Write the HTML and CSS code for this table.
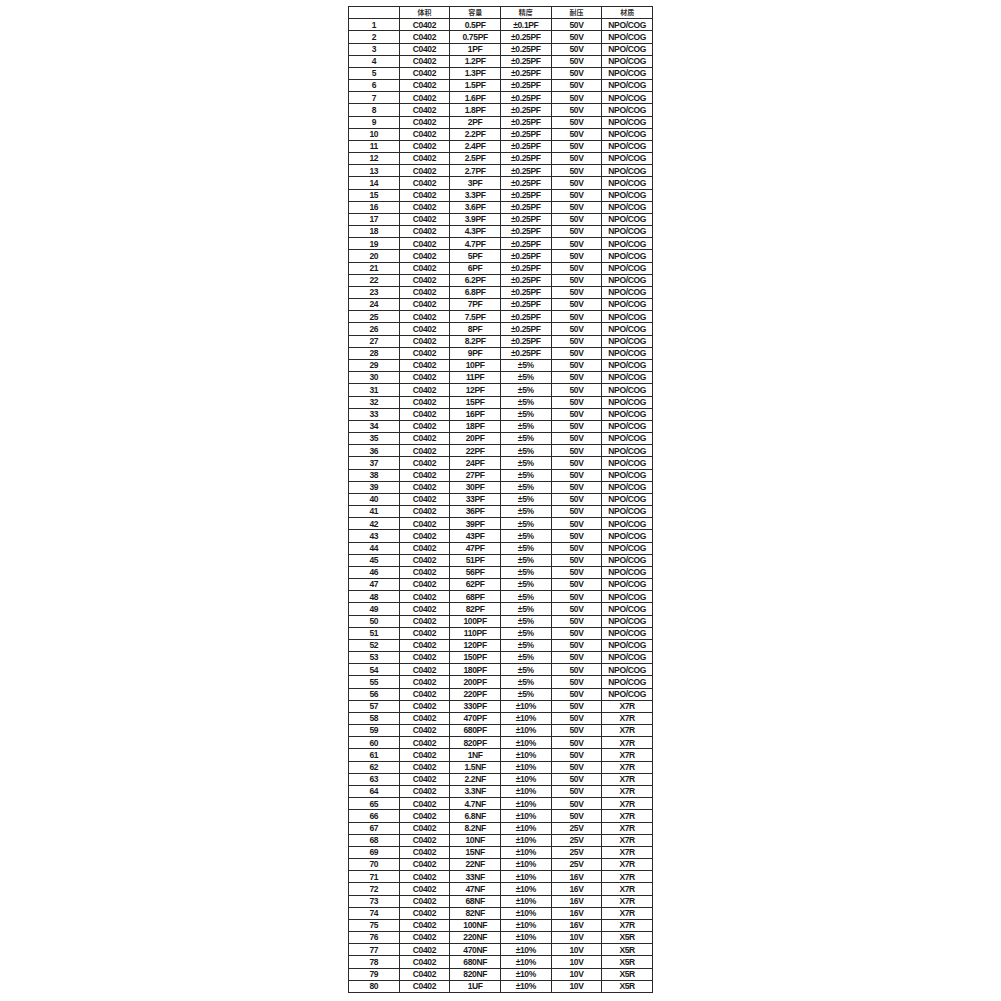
FILE: index.html
```html
<!DOCTYPE html>
<html lang="zh">
<head>
<meta charset="utf-8">
<title>C0402 电容规格表</title>
<link rel="stylesheet" href="styles.css">
</head>
<body>
<table class="spec">
<thead>
<tr><th></th><th>体积</th><th>容量</th><th>精度</th><th>耐压</th><th>材质</th></tr>
</thead>
<tbody>
<tr><td>1</td><td>C0402</td><td>0.5PF</td><td>±0.1PF</td><td>50V</td><td>NPO/COG</td></tr>
<tr><td>2</td><td>C0402</td><td>0.75PF</td><td>±0.25PF</td><td>50V</td><td>NPO/COG</td></tr>
<tr><td>3</td><td>C0402</td><td>1PF</td><td>±0.25PF</td><td>50V</td><td>NPO/COG</td></tr>
<tr><td>4</td><td>C0402</td><td>1.2PF</td><td>±0.25PF</td><td>50V</td><td>NPO/COG</td></tr>
<tr><td>5</td><td>C0402</td><td>1.3PF</td><td>±0.25PF</td><td>50V</td><td>NPO/COG</td></tr>
<tr><td>6</td><td>C0402</td><td>1.5PF</td><td>±0.25PF</td><td>50V</td><td>NPO/COG</td></tr>
<tr><td>7</td><td>C0402</td><td>1.6PF</td><td>±0.25PF</td><td>50V</td><td>NPO/COG</td></tr>
<tr><td>8</td><td>C0402</td><td>1.8PF</td><td>±0.25PF</td><td>50V</td><td>NPO/COG</td></tr>
<tr><td>9</td><td>C0402</td><td>2PF</td><td>±0.25PF</td><td>50V</td><td>NPO/COG</td></tr>
<tr><td>10</td><td>C0402</td><td>2.2PF</td><td>±0.25PF</td><td>50V</td><td>NPO/COG</td></tr>
<tr><td>11</td><td>C0402</td><td>2.4PF</td><td>±0.25PF</td><td>50V</td><td>NPO/COG</td></tr>
<tr><td>12</td><td>C0402</td><td>2.5PF</td><td>±0.25PF</td><td>50V</td><td>NPO/COG</td></tr>
<tr><td>13</td><td>C0402</td><td>2.7PF</td><td>±0.25PF</td><td>50V</td><td>NPO/COG</td></tr>
<tr><td>14</td><td>C0402</td><td>3PF</td><td>±0.25PF</td><td>50V</td><td>NPO/COG</td></tr>
<tr><td>15</td><td>C0402</td><td>3.3PF</td><td>±0.25PF</td><td>50V</td><td>NPO/COG</td></tr>
<tr><td>16</td><td>C0402</td><td>3.6PF</td><td>±0.25PF</td><td>50V</td><td>NPO/COG</td></tr>
<tr><td>17</td><td>C0402</td><td>3.9PF</td><td>±0.25PF</td><td>50V</td><td>NPO/COG</td></tr>
<tr><td>18</td><td>C0402</td><td>4.3PF</td><td>±0.25PF</td><td>50V</td><td>NPO/COG</td></tr>
<tr><td>19</td><td>C0402</td><td>4.7PF</td><td>±0.25PF</td><td>50V</td><td>NPO/COG</td></tr>
<tr><td>20</td><td>C0402</td><td>5PF</td><td>±0.25PF</td><td>50V</td><td>NPO/COG</td></tr>
<tr><td>21</td><td>C0402</td><td>6PF</td><td>±0.25PF</td><td>50V</td><td>NPO/COG</td></tr>
<tr><td>22</td><td>C0402</td><td>6.2PF</td><td>±0.25PF</td><td>50V</td><td>NPO/COG</td></tr>
<tr><td>23</td><td>C0402</td><td>6.8PF</td><td>±0.25PF</td><td>50V</td><td>NPO/COG</td></tr>
<tr><td>24</td><td>C0402</td><td>7PF</td><td>±0.25PF</td><td>50V</td><td>NPO/COG</td></tr>
<tr><td>25</td><td>C0402</td><td>7.5PF</td><td>±0.25PF</td><td>50V</td><td>NPO/COG</td></tr>
<tr><td>26</td><td>C0402</td><td>8PF</td><td>±0.25PF</td><td>50V</td><td>NPO/COG</td></tr>
<tr><td>27</td><td>C0402</td><td>8.2PF</td><td>±0.25PF</td><td>50V</td><td>NPO/COG</td></tr>
<tr><td>28</td><td>C0402</td><td>9PF</td><td>±0.25PF</td><td>50V</td><td>NPO/COG</td></tr>
<tr><td>29</td><td>C0402</td><td>10PF</td><td>±5%</td><td>50V</td><td>NPO/COG</td></tr>
<tr><td>30</td><td>C0402</td><td>11PF</td><td>±5%</td><td>50V</td><td>NPO/COG</td></tr>
<tr><td>31</td><td>C0402</td><td>12PF</td><td>±5%</td><td>50V</td><td>NPO/COG</td></tr>
<tr><td>32</td><td>C0402</td><td>15PF</td><td>±5%</td><td>50V</td><td>NPO/COG</td></tr>
<tr><td>33</td><td>C0402</td><td>16PF</td><td>±5%</td><td>50V</td><td>NPO/COG</td></tr>
<tr><td>34</td><td>C0402</td><td>18PF</td><td>±5%</td><td>50V</td><td>NPO/COG</td></tr>
<tr><td>35</td><td>C0402</td><td>20PF</td><td>±5%</td><td>50V</td><td>NPO/COG</td></tr>
<tr><td>36</td><td>C0402</td><td>22PF</td><td>±5%</td><td>50V</td><td>NPO/COG</td></tr>
<tr><td>37</td><td>C0402</td><td>24PF</td><td>±5%</td><td>50V</td><td>NPO/COG</td></tr>
<tr><td>38</td><td>C0402</td><td>27PF</td><td>±5%</td><td>50V</td><td>NPO/COG</td></tr>
<tr><td>39</td><td>C0402</td><td>30PF</td><td>±5%</td><td>50V</td><td>NPO/COG</td></tr>
<tr><td>40</td><td>C0402</td><td>33PF</td><td>±5%</td><td>50V</td><td>NPO/COG</td></tr>
<tr><td>41</td><td>C0402</td><td>36PF</td><td>±5%</td><td>50V</td><td>NPO/COG</td></tr>
<tr><td>42</td><td>C0402</td><td>39PF</td><td>±5%</td><td>50V</td><td>NPO/COG</td></tr>
<tr><td>43</td><td>C0402</td><td>43PF</td><td>±5%</td><td>50V</td><td>NPO/COG</td></tr>
<tr><td>44</td><td>C0402</td><td>47PF</td><td>±5%</td><td>50V</td><td>NPO/COG</td></tr>
<tr><td>45</td><td>C0402</td><td>51PF</td><td>±5%</td><td>50V</td><td>NPO/COG</td></tr>
<tr><td>46</td><td>C0402</td><td>56PF</td><td>±5%</td><td>50V</td><td>NPO/COG</td></tr>
<tr><td>47</td><td>C0402</td><td>62PF</td><td>±5%</td><td>50V</td><td>NPO/COG</td></tr>
<tr><td>48</td><td>C0402</td><td>68PF</td><td>±5%</td><td>50V</td><td>NPO/COG</td></tr>
<tr><td>49</td><td>C0402</td><td>82PF</td><td>±5%</td><td>50V</td><td>NPO/COG</td></tr>
<tr><td>50</td><td>C0402</td><td>100PF</td><td>±5%</td><td>50V</td><td>NPO/COG</td></tr>
<tr><td>51</td><td>C0402</td><td>110PF</td><td>±5%</td><td>50V</td><td>NPO/COG</td></tr>
<tr><td>52</td><td>C0402</td><td>120PF</td><td>±5%</td><td>50V</td><td>NPO/COG</td></tr>
<tr><td>53</td><td>C0402</td><td>150PF</td><td>±5%</td><td>50V</td><td>NPO/COG</td></tr>
<tr><td>54</td><td>C0402</td><td>180PF</td><td>±5%</td><td>50V</td><td>NPO/COG</td></tr>
<tr><td>55</td><td>C0402</td><td>200PF</td><td>±5%</td><td>50V</td><td>NPO/COG</td></tr>
<tr><td>56</td><td>C0402</td><td>220PF</td><td>±5%</td><td>50V</td><td>NPO/COG</td></tr>
<tr><td>57</td><td>C0402</td><td>330PF</td><td>±10%</td><td>50V</td><td>X7R</td></tr>
<tr><td>58</td><td>C0402</td><td>470PF</td><td>±10%</td><td>50V</td><td>X7R</td></tr>
<tr><td>59</td><td>C0402</td><td>680PF</td><td>±10%</td><td>50V</td><td>X7R</td></tr>
<tr><td>60</td><td>C0402</td><td>820PF</td><td>±10%</td><td>50V</td><td>X7R</td></tr>
<tr><td>61</td><td>C0402</td><td>1NF</td><td>±10%</td><td>50V</td><td>X7R</td></tr>
<tr><td>62</td><td>C0402</td><td>1.5NF</td><td>±10%</td><td>50V</td><td>X7R</td></tr>
<tr><td>63</td><td>C0402</td><td>2.2NF</td><td>±10%</td><td>50V</td><td>X7R</td></tr>
<tr><td>64</td><td>C0402</td><td>3.3NF</td><td>±10%</td><td>50V</td><td>X7R</td></tr>
<tr><td>65</td><td>C0402</td><td>4.7NF</td><td>±10%</td><td>50V</td><td>X7R</td></tr>
<tr><td>66</td><td>C0402</td><td>6.8NF</td><td>±10%</td><td>50V</td><td>X7R</td></tr>
<tr><td>67</td><td>C0402</td><td>8.2NF</td><td>±10%</td><td>25V</td><td>X7R</td></tr>
<tr><td>68</td><td>C0402</td><td>10NF</td><td>±10%</td><td>25V</td><td>X7R</td></tr>
<tr><td>69</td><td>C0402</td><td>15NF</td><td>±10%</td><td>25V</td><td>X7R</td></tr>
<tr><td>70</td><td>C0402</td><td>22NF</td><td>±10%</td><td>25V</td><td>X7R</td></tr>
<tr><td>71</td><td>C0402</td><td>33NF</td><td>±10%</td><td>16V</td><td>X7R</td></tr>
<tr><td>72</td><td>C0402</td><td>47NF</td><td>±10%</td><td>16V</td><td>X7R</td></tr>
<tr><td>73</td><td>C0402</td><td>68NF</td><td>±10%</td><td>16V</td><td>X7R</td></tr>
<tr><td>74</td><td>C0402</td><td>82NF</td><td>±10%</td><td>16V</td><td>X7R</td></tr>
<tr><td>75</td><td>C0402</td><td>100NF</td><td>±10%</td><td>16V</td><td>X7R</td></tr>
<tr><td>76</td><td>C0402</td><td>220NF</td><td>±10%</td><td>10V</td><td>X5R</td></tr>
<tr><td>77</td><td>C0402</td><td>470NF</td><td>±10%</td><td>10V</td><td>X5R</td></tr>
<tr><td>78</td><td>C0402</td><td>680NF</td><td>±10%</td><td>10V</td><td>X5R</td></tr>
<tr><td>79</td><td>C0402</td><td>820NF</td><td>±10%</td><td>10V</td><td>X5R</td></tr>
<tr><td>80</td><td>C0402</td><td>1UF</td><td>±10%</td><td>10V</td><td>X5R</td></tr>
</tbody>
</table>
</body>
</html>
```
FILE: styles.css
```css
html, body {
  margin: 0;
  padding: 0;
  background: #ffffff;
}

.spec {
  margin: 6px auto 0;
  width: 305px;
  table-layout: fixed;
  border-collapse: collapse;
  border: 1px solid #2a2a2a;
  font-family: "Liberation Sans", "Noto Sans CJK SC", sans-serif;
  font-size: 8.5px;
  font-weight: bold;
  letter-spacing: -0.35px;
  color: #1a1a1a;
}

.spec tr {
  height: 12.185px;
}

.spec th,
.spec td {
  border: 1px solid #2a2a2a;
  padding: 0;
  text-align: center;
  vertical-align: middle;
  line-height: 1;
  white-space: nowrap;
  overflow: hidden;
}

.spec th {
  font-family: "Noto Sans CJK SC", sans-serif;
  font-size: 7px;
  font-weight: bold;
  letter-spacing: 0;
  color: #333333;
}
```
